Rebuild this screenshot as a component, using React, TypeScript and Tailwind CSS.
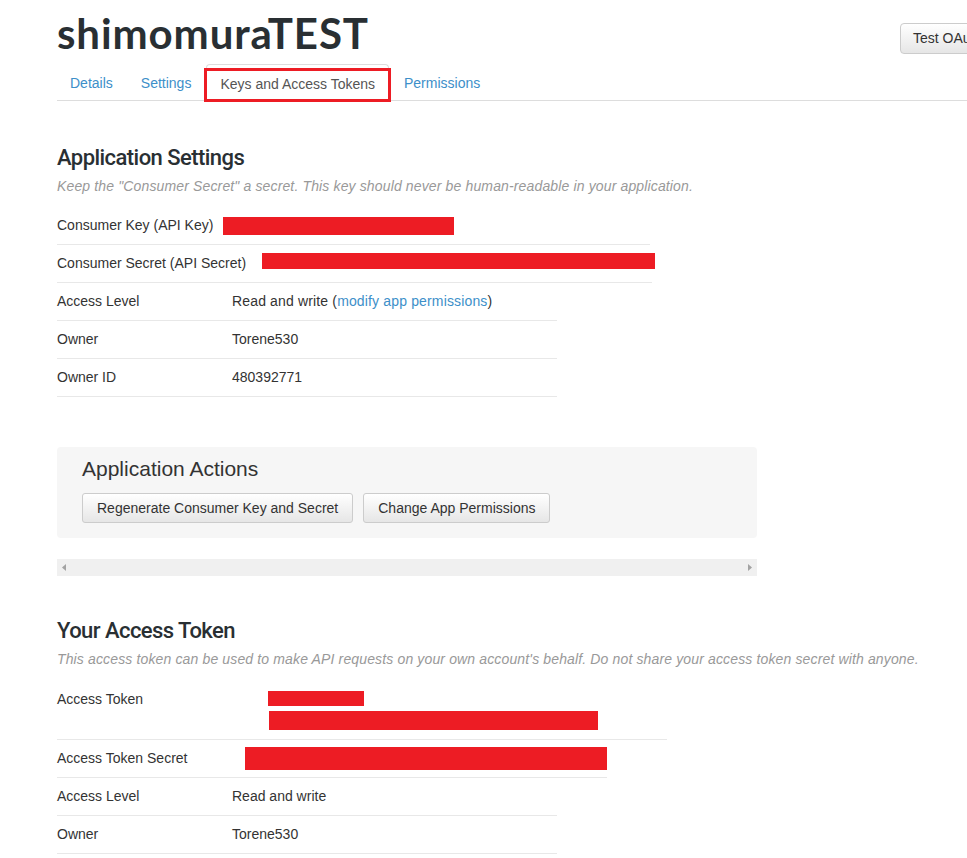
import React from "react";

const Red = ({ w, h, className = "" }: { w: number; h: number; className?: string }) => (
  <div className={`bg-[#ed1c24] ${className}`} style={{ width: w, height: h }} />
);

function Row({
  label,
  children,
  width,
  labelW = 175,
  h = 38,
}: {
  label: string;
  children?: React.ReactNode;
  width: number;
  labelW?: number;
  h?: number;
}) {
  return (
    <div className="flex items-center border-b border-[#e8e8e8]" style={{ width, height: h }}>
      <div className="shrink-0" style={{ width: labelW }}>{label}</div>
      <div className="flex-1">{children}</div>
    </div>
  );
}

export default function App() {
  return (
    <div
      className="w-[967px] h-[858px] overflow-hidden bg-white text-[14px] text-[#333]"
      style={{ fontFamily: '"Liberation Sans", Arial, sans-serif' }}
    >
      <div className="w-[1050px] pl-[57px]">
        {/* header */}
        <div className="flex items-start pt-[9px] h-[64px]">
          <h1
            className="text-[42px] font-bold leading-[48px] tracking-[0.9px] text-[#292f33]"
            style={{ fontFamily: 'Lato, "Liberation Sans", sans-serif' }}
          >
            shimomuraTEST
          </h1>
          <div className="ml-auto mt-[14px] w-[150px]">
            <button className="h-[31px] px-[12px] rounded-[4px] border border-[#ccc] bg-gradient-to-b from-white to-[#e6e6e6] text-[14px] text-[#333] whitespace-nowrap">
              Test OAuth Settings
            </button>
          </div>
        </div>
        {/* tabs */}
        <div className="flex border-b border-[#ddd] h-[37px]">
          <div className="px-[13px] pt-[9px] text-[#3d8fc9] mr-[2px]">Details</div>
          <div className="px-[13px] pt-[9px] text-[#3d8fc9] mr-[2px]">Settings</div>
          <div className="relative px-[13px] pt-[9px] text-[#555] mr-[2px] border border-[#ddd] border-b-white rounded-t-[4px] bg-white h-[38px]">
            Keys and Access Tokens
            <div className="absolute left-[-3px] right-[-3px] top-[3px] bottom-[-1px] border-[3px] border-[#ed1c24]" />
          </div>
          <div className="px-[13px] pt-[9px] text-[#3d8fc9]">Permissions</div>
        </div>

        {/* Application Settings */}
        <h2
          className="mt-[44px] text-[22px] font-medium leading-[26px] text-[#292f33] tracking-[-0.55px]"
          style={{ fontFamily: 'Roboto, "Liberation Sans", sans-serif' }}
        >
          Application Settings
        </h2>
        <p className="italic text-[#999] mt-[5px] leading-[20px] tracking-[0.14px]">
          Keep the "Consumer Secret" a secret. This key should never be human-readable in your application.
        </p>
        <div className="mt-[11px]">
          <Row label="Consumer Key (API Key)" width={593} labelW={166}>
            <Red w={231} h={18} />
          </Row>
          <Row label="Consumer Secret (API Secret)" width={595} labelW={205}>
            <Red w={393} h={16} className="-mt-[5px]" />
          </Row>
          <Row label="Access Level" width={500}>
            <span className="tracking-[0.15px]">
              Read and write (<span className="text-[#3d8fc9]">modify app permissions</span>)
            </span>
          </Row>
          <Row label="Owner" width={500}>Torene530</Row>
          <Row label="Owner ID" width={500}>480392771</Row>
        </div>

        {/* Application Actions */}
        <div className="mt-[50px] w-[700px] h-[91px] rounded-[4px] bg-[#f6f6f6] px-[25px] pt-[10px]">
          <div className="text-[21px] leading-[24px] text-[#333]">Application Actions</div>
          <div className="flex gap-[10px] mt-[12px]">
            <button className="h-[30px] px-[14px] rounded-[3px] border border-[#ccc] bg-gradient-to-b from-white to-[#e6e6e6] text-[14px] text-[#333]">
              Regenerate Consumer Key and Secret
            </button>
            <button className="h-[30px] px-[14px] rounded-[3px] border border-[#ccc] bg-gradient-to-b from-white to-[#e6e6e6] text-[14px] text-[#333]">
              Change App Permissions
            </button>
          </div>
        </div>

        {/* scrollbar */}
        <div className="mt-[21px] w-[700px] h-[17px] bg-[#f0f0f0] flex items-center justify-between px-[5px]">
          <svg width="4" height="7" viewBox="0 0 4 7"><path d="M4 0 L0 3.5 L4 7 Z" fill="#a3a3a3" /></svg>
          <svg width="4" height="7" viewBox="0 0 4 7"><path d="M0 0 L4 3.5 L0 7 Z" fill="#a3a3a3" /></svg>
        </div>

        {/* Your Access Token */}
        <h2
          className="mt-[42px] text-[22px] font-medium leading-[26px] text-[#292f33] tracking-[-0.55px]"
          style={{ fontFamily: 'Roboto, "Liberation Sans", sans-serif' }}
        >
          Your Access Token
        </h2>
        <p className="italic text-[#999] mt-[5px] leading-[20px] tracking-[0.14px]">
          This access token can be used to make API requests on your own account's behalf. Do not share your access token secret with anyone.
        </p>
        <div className="flex items-start border-b border-[#e8e8e8] w-[610px] h-[61px] pt-[11px] mt-[10px]">
          <div className="w-[211px] shrink-0 leading-[16px] pt-[1px]">Access Token</div>
          <div className="flex flex-col gap-[5px] pt-[1px]">
            <Red w={96} h={15} />
            <Red w={329} h={19} className="ml-[1px]" />
          </div>
        </div>
        <Row label="Access Token Secret" width={550} labelW={188}>
          <Red w={362} h={23} />
        </Row>
        <Row label="Access Level" width={500}>Read and write</Row>
        <Row label="Owner" width={500}>Torene530</Row>
      </div>
    </div>
  );
}
